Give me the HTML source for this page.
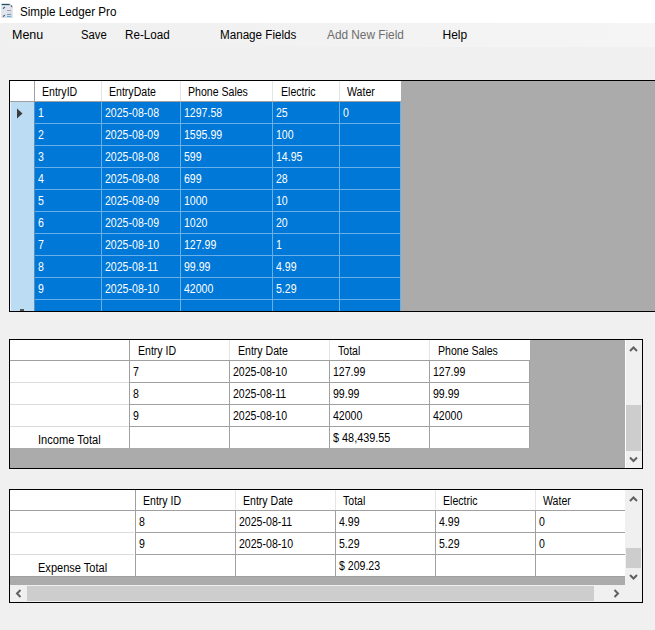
<!DOCTYPE html>
<html><head><meta charset="utf-8"><style>
html,body{margin:0;padding:0;}
body{width:655px;height:630px;background:#f0f0f0;position:relative;overflow:hidden;font-family:"Liberation Sans", sans-serif;}
body>div{position:absolute;}
.t{white-space:pre;line-height:20px;height:20px;}
</style></head><body>
<div style="left:0px;top:0px;width:655px;height:23px;background:#ffffff;"></div>
<svg style="position:absolute;left:0;top:0" width="16" height="20" viewBox="0 0 16 20">
<defs><linearGradient id="g" x1="0" y1="0" x2="1" y2="1"><stop offset="0" stop-color="#d2e9f7"/><stop offset="0.5" stop-color="#e6e4ec"/><stop offset="1" stop-color="#cfd3da"/></linearGradient></defs>
<path d="M1.1 3.6 H10.2 L12.6 6 V18 H1.1 Z" fill="url(#g)"/>
<rect x="1.7" y="3.9" width="8" height="1.2" fill="#234a5e"/>
<path d="M10 4.5 L11.5 4.5 L11.5 5.8 Z" fill="#ffffff"/>
<path d="M10.2 5.6 L12.2 5.6 L12.2 7.8 Z" fill="#4a4a4a"/>
<path d="M3 8.7 L4.9 7.1" stroke="#3a4550" stroke-width="1.1"/>
<path d="M3.1 16.7 L4.7 15.1" stroke="#3a4550" stroke-width="1.1"/>
<rect x="6.9" y="10.2" width="4.2" height="0.8" fill="#8d99a3"/>
<rect x="6.9" y="14" width="4.2" height="0.9" fill="#4f9fd0"/>
<rect x="6.9" y="16" width="4.2" height="1" fill="#63b3e3"/>
</svg>
<div class="t" style="left:20px;top:2px;font-size:12px;color:#000;transform:scaleX(0.97);transform-origin:0 0;">Simple Ledger Pro</div>
<div style="left:0px;top:23px;width:655px;height:24px;background:#f0f0f0;background:linear-gradient(to right,#f0f0f0,#f2f2f2 50%,#f5f5f5);"></div>
<div class="t" style="left:12px;top:25px;font-size:12px;color:#000;transform:scaleX(1.04);transform-origin:0 0;">Menu</div>
<div class="t" style="left:81px;top:25px;font-size:12px;color:#000;transform:scaleX(0.94);transform-origin:0 0;">Save</div>
<div class="t" style="left:124.5px;top:25px;font-size:12px;color:#000;transform:scaleX(0.97);transform-origin:0 0;">Re-Load</div>
<div class="t" style="left:219.5px;top:25px;font-size:12px;color:#000;transform:scaleX(0.97);transform-origin:0 0;">Manage Fields</div>
<div class="t" style="left:326.5px;top:25px;font-size:12px;color:#6d6d6d;transform:scaleX(0.985);transform-origin:0 0;">Add New Field</div>
<div class="t" style="left:442.5px;top:25px;font-size:12px;color:#000;">Help</div>
<div style="left:9px;top:80px;width:646px;height:232px;background:#000;"></div>
<div style="left:10px;top:81px;width:645px;height:230px;background:#ababab;"></div>
<div style="left:10px;top:81px;width:391px;height:20px;background:#ffffff;"></div>
<div style="left:101px;top:81px;width:1px;height:20px;background:#e5e5e5;"></div>
<div style="left:180px;top:81px;width:1px;height:20px;background:#e5e5e5;"></div>
<div style="left:272px;top:81px;width:1px;height:20px;background:#e5e5e5;"></div>
<div style="left:339px;top:81px;width:1px;height:20px;background:#e5e5e5;"></div>
<div style="left:34px;top:81px;width:1px;height:20px;background:#a0a0a0;"></div>
<div style="left:10px;top:101px;width:391px;height:1px;background:#a0a0a0;"></div>
<div style="left:10px;top:102px;width:24px;height:209px;background:#bcdcf4;"></div>
<div style="left:10px;top:102px;width:1px;height:209px;background:#e8f3fb;"></div>
<div style="left:34px;top:102px;width:1px;height:209px;background:#5a8fc0;"></div>
<div style="left:35px;top:102px;width:365px;height:209px;background:#0078d7;"></div>
<div style="left:101px;top:102px;width:1px;height:209px;background:#69b0ea;"></div>
<div style="left:180px;top:102px;width:1px;height:209px;background:#69b0ea;"></div>
<div style="left:272px;top:102px;width:1px;height:209px;background:#69b0ea;"></div>
<div style="left:339px;top:102px;width:1px;height:209px;background:#69b0ea;"></div>
<div style="left:400px;top:102px;width:1px;height:209px;background:#69b0ea;"></div>
<div style="left:35px;top:123px;width:366px;height:1px;background:#69b0ea;"></div>
<div style="left:35px;top:145px;width:366px;height:1px;background:#69b0ea;"></div>
<div style="left:35px;top:167px;width:366px;height:1px;background:#69b0ea;"></div>
<div style="left:35px;top:189px;width:366px;height:1px;background:#69b0ea;"></div>
<div style="left:35px;top:211px;width:366px;height:1px;background:#69b0ea;"></div>
<div style="left:35px;top:233px;width:366px;height:1px;background:#69b0ea;"></div>
<div style="left:35px;top:255px;width:366px;height:1px;background:#69b0ea;"></div>
<div style="left:35px;top:277px;width:366px;height:1px;background:#69b0ea;"></div>
<div style="left:35px;top:299px;width:366px;height:1px;background:#69b0ea;"></div>
<div style="left:20px;top:309px;width:4px;height:2px;background:#555555;"></div>
<svg style="position:absolute;left:16px;top:108px" width="8" height="11" viewBox="0 0 8 11"><path d="M1 0.5 L6.5 5.5 L1 10.5 Z" fill="#3b3b3b"/></svg>
<div class="t" style="left:42px;top:82px;font-size:12px;color:#000;transform:scaleX(0.88);transform-origin:0 0;">EntryID</div>
<div class="t" style="left:109px;top:82px;font-size:12px;color:#000;transform:scaleX(0.88);transform-origin:0 0;">EntryDate</div>
<div class="t" style="left:188px;top:82px;font-size:12px;color:#000;transform:scaleX(0.88);transform-origin:0 0;">Phone Sales</div>
<div class="t" style="left:281px;top:82px;font-size:12px;color:#000;transform:scaleX(0.88);transform-origin:0 0;">Electric</div>
<div class="t" style="left:347px;top:82px;font-size:12px;color:#000;transform:scaleX(0.88);transform-origin:0 0;">Water</div>
<div class="t" style="left:38px;top:103px;font-size:12px;color:#ffffff;transform:scaleX(0.88);transform-origin:0 0;">1</div>
<div class="t" style="left:105px;top:103px;font-size:12px;color:#ffffff;transform:scaleX(0.88);transform-origin:0 0;">2025-08-08</div>
<div class="t" style="left:184px;top:103px;font-size:12px;color:#ffffff;transform:scaleX(0.88);transform-origin:0 0;">1297.58</div>
<div class="t" style="left:276px;top:103px;font-size:12px;color:#ffffff;transform:scaleX(0.88);transform-origin:0 0;">25</div>
<div class="t" style="left:343px;top:103px;font-size:12px;color:#ffffff;transform:scaleX(0.88);transform-origin:0 0;">0</div>
<div class="t" style="left:38px;top:125px;font-size:12px;color:#ffffff;transform:scaleX(0.88);transform-origin:0 0;">2</div>
<div class="t" style="left:105px;top:125px;font-size:12px;color:#ffffff;transform:scaleX(0.88);transform-origin:0 0;">2025-08-09</div>
<div class="t" style="left:184px;top:125px;font-size:12px;color:#ffffff;transform:scaleX(0.88);transform-origin:0 0;">1595.99</div>
<div class="t" style="left:276px;top:125px;font-size:12px;color:#ffffff;transform:scaleX(0.88);transform-origin:0 0;">100</div>
<div class="t" style="left:38px;top:147px;font-size:12px;color:#ffffff;transform:scaleX(0.88);transform-origin:0 0;">3</div>
<div class="t" style="left:105px;top:147px;font-size:12px;color:#ffffff;transform:scaleX(0.88);transform-origin:0 0;">2025-08-08</div>
<div class="t" style="left:184px;top:147px;font-size:12px;color:#ffffff;transform:scaleX(0.88);transform-origin:0 0;">599</div>
<div class="t" style="left:276px;top:147px;font-size:12px;color:#ffffff;transform:scaleX(0.88);transform-origin:0 0;">14.95</div>
<div class="t" style="left:38px;top:169px;font-size:12px;color:#ffffff;transform:scaleX(0.88);transform-origin:0 0;">4</div>
<div class="t" style="left:105px;top:169px;font-size:12px;color:#ffffff;transform:scaleX(0.88);transform-origin:0 0;">2025-08-08</div>
<div class="t" style="left:184px;top:169px;font-size:12px;color:#ffffff;transform:scaleX(0.88);transform-origin:0 0;">699</div>
<div class="t" style="left:276px;top:169px;font-size:12px;color:#ffffff;transform:scaleX(0.88);transform-origin:0 0;">28</div>
<div class="t" style="left:38px;top:191px;font-size:12px;color:#ffffff;transform:scaleX(0.88);transform-origin:0 0;">5</div>
<div class="t" style="left:105px;top:191px;font-size:12px;color:#ffffff;transform:scaleX(0.88);transform-origin:0 0;">2025-08-09</div>
<div class="t" style="left:184px;top:191px;font-size:12px;color:#ffffff;transform:scaleX(0.88);transform-origin:0 0;">1000</div>
<div class="t" style="left:276px;top:191px;font-size:12px;color:#ffffff;transform:scaleX(0.88);transform-origin:0 0;">10</div>
<div class="t" style="left:38px;top:213px;font-size:12px;color:#ffffff;transform:scaleX(0.88);transform-origin:0 0;">6</div>
<div class="t" style="left:105px;top:213px;font-size:12px;color:#ffffff;transform:scaleX(0.88);transform-origin:0 0;">2025-08-09</div>
<div class="t" style="left:184px;top:213px;font-size:12px;color:#ffffff;transform:scaleX(0.88);transform-origin:0 0;">1020</div>
<div class="t" style="left:276px;top:213px;font-size:12px;color:#ffffff;transform:scaleX(0.88);transform-origin:0 0;">20</div>
<div class="t" style="left:38px;top:235px;font-size:12px;color:#ffffff;transform:scaleX(0.88);transform-origin:0 0;">7</div>
<div class="t" style="left:105px;top:235px;font-size:12px;color:#ffffff;transform:scaleX(0.88);transform-origin:0 0;">2025-08-10</div>
<div class="t" style="left:184px;top:235px;font-size:12px;color:#ffffff;transform:scaleX(0.88);transform-origin:0 0;">127.99</div>
<div class="t" style="left:276px;top:235px;font-size:12px;color:#ffffff;transform:scaleX(0.88);transform-origin:0 0;">1</div>
<div class="t" style="left:38px;top:257px;font-size:12px;color:#ffffff;transform:scaleX(0.88);transform-origin:0 0;">8</div>
<div class="t" style="left:105px;top:257px;font-size:12px;color:#ffffff;transform:scaleX(0.88);transform-origin:0 0;">2025-08-11</div>
<div class="t" style="left:184px;top:257px;font-size:12px;color:#ffffff;transform:scaleX(0.88);transform-origin:0 0;">99.99</div>
<div class="t" style="left:276px;top:257px;font-size:12px;color:#ffffff;transform:scaleX(0.88);transform-origin:0 0;">4.99</div>
<div class="t" style="left:38px;top:279px;font-size:12px;color:#ffffff;transform:scaleX(0.88);transform-origin:0 0;">9</div>
<div class="t" style="left:105px;top:279px;font-size:12px;color:#ffffff;transform:scaleX(0.88);transform-origin:0 0;">2025-08-10</div>
<div class="t" style="left:184px;top:279px;font-size:12px;color:#ffffff;transform:scaleX(0.88);transform-origin:0 0;">42000</div>
<div class="t" style="left:276px;top:279px;font-size:12px;color:#ffffff;transform:scaleX(0.88);transform-origin:0 0;">5.29</div>
<div style="left:9px;top:339px;width:634px;height:130px;background:#000;"></div>
<div style="left:10px;top:340px;width:632px;height:128px;background:#ababab;"></div>
<div style="left:10px;top:340px;width:520px;height:20px;background:#ffffff;"></div>
<div style="left:229px;top:340px;width:1px;height:20px;background:#e5e5e5;"></div>
<div style="left:329px;top:340px;width:1px;height:20px;background:#e5e5e5;"></div>
<div style="left:429px;top:340px;width:1px;height:20px;background:#e5e5e5;"></div>
<div style="left:129px;top:340px;width:1px;height:20px;background:#a0a0a0;"></div>
<div style="left:10px;top:360px;width:520px;height:1px;background:#a0a0a0;"></div>
<div style="left:10px;top:361px;width:519px;height:87px;background:#ffffff;"></div>
<div style="left:129px;top:361px;width:1px;height:87px;background:#a0a0a0;"></div>
<div style="left:229px;top:361px;width:1px;height:87px;background:#a0a0a0;"></div>
<div style="left:329px;top:361px;width:1px;height:87px;background:#a0a0a0;"></div>
<div style="left:429px;top:361px;width:1px;height:87px;background:#a0a0a0;"></div>
<div style="left:529px;top:361px;width:1px;height:87px;background:#a0a0a0;"></div>
<div style="left:10px;top:382px;width:119px;height:1px;background:#dcdcdc;"></div>
<div style="left:130px;top:382px;width:399px;height:1px;background:#a0a0a0;"></div>
<div style="left:10px;top:404px;width:119px;height:1px;background:#dcdcdc;"></div>
<div style="left:130px;top:404px;width:399px;height:1px;background:#a0a0a0;"></div>
<div style="left:10px;top:426px;width:119px;height:1px;background:#dcdcdc;"></div>
<div style="left:130px;top:426px;width:399px;height:1px;background:#a0a0a0;"></div>
<div class="t" style="left:138px;top:341px;font-size:12px;color:#000;transform:scaleX(0.88);transform-origin:0 0;">Entry ID</div>
<div class="t" style="left:238px;top:341px;font-size:12px;color:#000;transform:scaleX(0.88);transform-origin:0 0;">Entry Date</div>
<div class="t" style="left:338px;top:341px;font-size:12px;color:#000;transform:scaleX(0.88);transform-origin:0 0;">Total</div>
<div class="t" style="left:438px;top:341px;font-size:12px;color:#000;transform:scaleX(0.88);transform-origin:0 0;">Phone Sales</div>
<div class="t" style="left:133px;top:362px;font-size:12px;color:#000;transform:scaleX(0.88);transform-origin:0 0;">7</div>
<div class="t" style="left:233px;top:362px;font-size:12px;color:#000;transform:scaleX(0.88);transform-origin:0 0;">2025-08-10</div>
<div class="t" style="left:333px;top:362px;font-size:12px;color:#000;transform:scaleX(0.88);transform-origin:0 0;">127.99</div>
<div class="t" style="left:433px;top:362px;font-size:12px;color:#000;transform:scaleX(0.88);transform-origin:0 0;">127.99</div>
<div class="t" style="left:133px;top:384px;font-size:12px;color:#000;transform:scaleX(0.88);transform-origin:0 0;">8</div>
<div class="t" style="left:233px;top:384px;font-size:12px;color:#000;transform:scaleX(0.88);transform-origin:0 0;">2025-08-11</div>
<div class="t" style="left:333px;top:384px;font-size:12px;color:#000;transform:scaleX(0.88);transform-origin:0 0;">99.99</div>
<div class="t" style="left:433px;top:384px;font-size:12px;color:#000;transform:scaleX(0.88);transform-origin:0 0;">99.99</div>
<div class="t" style="left:133px;top:406px;font-size:12px;color:#000;transform:scaleX(0.88);transform-origin:0 0;">9</div>
<div class="t" style="left:233px;top:406px;font-size:12px;color:#000;transform:scaleX(0.88);transform-origin:0 0;">2025-08-10</div>
<div class="t" style="left:333px;top:406px;font-size:12px;color:#000;transform:scaleX(0.88);transform-origin:0 0;">42000</div>
<div class="t" style="left:433px;top:406px;font-size:12px;color:#000;transform:scaleX(0.88);transform-origin:0 0;">42000</div>
<div class="t" style="left:37.5px;top:430px;font-size:12px;color:#000;transform:scaleX(0.925);transform-origin:0 0;">Income Total</div>
<div class="t" style="left:333px;top:428px;font-size:12px;color:#000;transform:scaleX(0.905);transform-origin:0 0;">$ 48,439.55</div>
<div style="left:625px;top:340px;width:17px;height:128px;background:#f0f0f0;"></div>
<div style="left:625px;top:340px;width:1px;height:128px;background:#ffffff;"></div>
<div style="left:626px;top:405px;width:15px;height:46px;background:#cdcdcd;"></div>
<svg style="position:absolute;left:0;top:0" width="655" height="630"><path d="M630.0 351.0 L633.5 347.5 L637.0 351.0" stroke="#606060" stroke-width="2" fill="none"/></svg>
<svg style="position:absolute;left:0;top:0" width="655" height="630"><path d="M630.0 457.5 L633.5 461 L637.0 457.5" stroke="#606060" stroke-width="2" fill="none"/></svg>
<div style="left:9px;top:489px;width:634px;height:114px;background:#000;"></div>
<div style="left:10px;top:490px;width:632px;height:112px;background:#ababab;"></div>
<div style="left:10px;top:490px;width:615px;height:20px;background:#ffffff;"></div>
<div style="left:235px;top:490px;width:1px;height:20px;background:#e5e5e5;"></div>
<div style="left:335px;top:490px;width:1px;height:20px;background:#e5e5e5;"></div>
<div style="left:435px;top:490px;width:1px;height:20px;background:#e5e5e5;"></div>
<div style="left:535px;top:490px;width:1px;height:20px;background:#e5e5e5;"></div>
<div style="left:135px;top:490px;width:1px;height:20px;background:#a0a0a0;"></div>
<div style="left:10px;top:510px;width:615px;height:1px;background:#a0a0a0;"></div>
<div style="left:10px;top:511px;width:615px;height:65px;background:#ffffff;"></div>
<div style="left:135px;top:511px;width:1px;height:65px;background:#a0a0a0;"></div>
<div style="left:235px;top:511px;width:1px;height:65px;background:#a0a0a0;"></div>
<div style="left:335px;top:511px;width:1px;height:65px;background:#a0a0a0;"></div>
<div style="left:435px;top:511px;width:1px;height:65px;background:#a0a0a0;"></div>
<div style="left:535px;top:511px;width:1px;height:65px;background:#a0a0a0;"></div>
<div style="left:10px;top:532px;width:124px;height:1px;background:#dcdcdc;"></div>
<div style="left:136px;top:532px;width:489px;height:1px;background:#a0a0a0;"></div>
<div style="left:10px;top:554px;width:124px;height:1px;background:#dcdcdc;"></div>
<div style="left:136px;top:554px;width:489px;height:1px;background:#a0a0a0;"></div>
<div style="left:10px;top:576px;width:615px;height:1px;background:#a0a0a0;"></div>
<div class="t" style="left:143px;top:491px;font-size:12px;color:#000;transform:scaleX(0.88);transform-origin:0 0;">Entry ID</div>
<div class="t" style="left:243px;top:491px;font-size:12px;color:#000;transform:scaleX(0.88);transform-origin:0 0;">Entry Date</div>
<div class="t" style="left:343px;top:491px;font-size:12px;color:#000;transform:scaleX(0.88);transform-origin:0 0;">Total</div>
<div class="t" style="left:443px;top:491px;font-size:12px;color:#000;transform:scaleX(0.88);transform-origin:0 0;">Electric</div>
<div class="t" style="left:543px;top:491px;font-size:12px;color:#000;transform:scaleX(0.88);transform-origin:0 0;">Water</div>
<div class="t" style="left:139px;top:512px;font-size:12px;color:#000;transform:scaleX(0.88);transform-origin:0 0;">8</div>
<div class="t" style="left:239px;top:512px;font-size:12px;color:#000;transform:scaleX(0.88);transform-origin:0 0;">2025-08-11</div>
<div class="t" style="left:339px;top:512px;font-size:12px;color:#000;transform:scaleX(0.88);transform-origin:0 0;">4.99</div>
<div class="t" style="left:439px;top:512px;font-size:12px;color:#000;transform:scaleX(0.88);transform-origin:0 0;">4.99</div>
<div class="t" style="left:539px;top:512px;font-size:12px;color:#000;transform:scaleX(0.88);transform-origin:0 0;">0</div>
<div class="t" style="left:139px;top:534px;font-size:12px;color:#000;transform:scaleX(0.88);transform-origin:0 0;">9</div>
<div class="t" style="left:239px;top:534px;font-size:12px;color:#000;transform:scaleX(0.88);transform-origin:0 0;">2025-08-10</div>
<div class="t" style="left:339px;top:534px;font-size:12px;color:#000;transform:scaleX(0.88);transform-origin:0 0;">5.29</div>
<div class="t" style="left:439px;top:534px;font-size:12px;color:#000;transform:scaleX(0.88);transform-origin:0 0;">5.29</div>
<div class="t" style="left:539px;top:534px;font-size:12px;color:#000;transform:scaleX(0.88);transform-origin:0 0;">0</div>
<div class="t" style="left:37.5px;top:558px;font-size:12px;color:#000;transform:scaleX(0.92);transform-origin:0 0;">Expense Total</div>
<div class="t" style="left:339px;top:556px;font-size:12px;color:#000;transform:scaleX(0.88);transform-origin:0 0;">$ 209.23</div>
<div style="left:625px;top:490px;width:17px;height:95px;background:#f0f0f0;"></div>
<div style="left:626px;top:548px;width:15px;height:20px;background:#cdcdcd;"></div>
<svg style="position:absolute;left:0;top:0" width="655" height="630"><path d="M630.0 501.0 L633.5 497.5 L637.0 501.0" stroke="#606060" stroke-width="2" fill="none"/></svg>
<svg style="position:absolute;left:0;top:0" width="655" height="630"><path d="M630.0 575.0 L633.5 578.5 L637.0 575.0" stroke="#606060" stroke-width="2" fill="none"/></svg>
<div style="left:10px;top:585px;width:632px;height:17px;background:#f0f0f0;"></div>
<div style="left:27px;top:586px;width:567px;height:15px;background:#cdcdcd;"></div>
<svg style="position:absolute;left:0;top:0" width="655" height="630"><path d="M20.5 590.0 L17 593.5 L20.5 597.0" stroke="#606060" stroke-width="2" fill="none"/></svg>
<svg style="position:absolute;left:0;top:0" width="655" height="630"><path d="M614.5 590.0 L618 593.5 L614.5 597.0" stroke="#606060" stroke-width="2" fill="none"/></svg>
</body></html>
